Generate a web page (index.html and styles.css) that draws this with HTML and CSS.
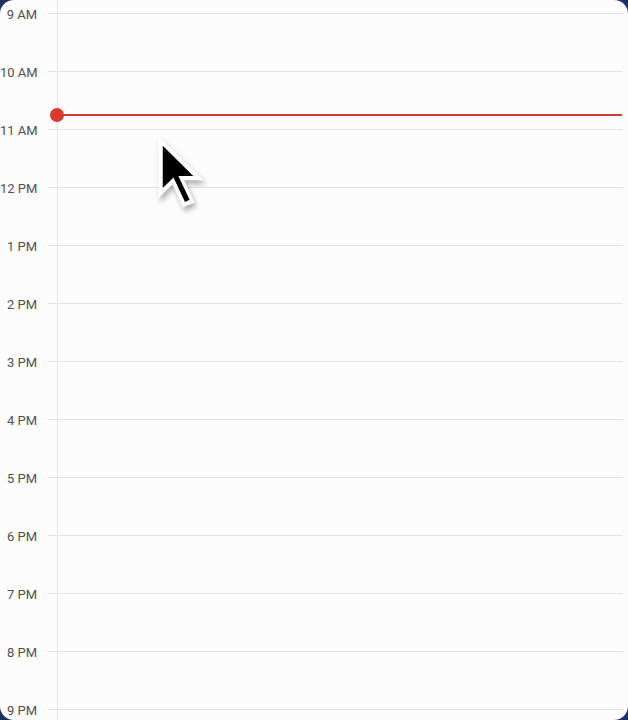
FILE: index.html
```html
<!DOCTYPE html>
<html>
<head>
<meta charset="utf-8">
<link rel="stylesheet" href="styles.css">
</head>
<body>
<div class="panel">
  <div class="grid">
    <div class="row"><span class="label">9 AM</span><span class="line"></span></div>
    <div class="row"><span class="label">10 AM</span><span class="line"></span></div>
    <div class="row"><span class="label">11 AM</span><span class="line"></span></div>
    <div class="row"><span class="label">12 PM</span><span class="line"></span></div>
    <div class="row"><span class="label">1 PM</span><span class="line"></span></div>
    <div class="row"><span class="label">2 PM</span><span class="line"></span></div>
    <div class="row"><span class="label">3 PM</span><span class="line"></span></div>
    <div class="row"><span class="label">4 PM</span><span class="line"></span></div>
    <div class="row"><span class="label">5 PM</span><span class="line"></span></div>
    <div class="row"><span class="label">6 PM</span><span class="line"></span></div>
    <div class="row"><span class="label">7 PM</span><span class="line"></span></div>
    <div class="row"><span class="label">8 PM</span><span class="line"></span></div>
    <div class="row"><span class="label">9 PM</span><span class="line"></span></div>
  </div>
  <div class="vline"></div>
  <div class="now"><span class="now-dot"></span><span class="now-line"></span></div>
  <svg class="cursor" width="65" height="94" viewBox="0 0 50 72">
    <defs>
      <filter id="sh" x="-30%" y="-30%" width="160%" height="160%">
        <feGaussianBlur stdDeviation="2"/>
      </filter>
    </defs>
    <path d="M4 3 L4 51 L15 40 L23 58 L32 54 L24 37 L39 37 Z" fill="rgba(0,0,0,0.3)" filter="url(#sh)" transform="translate(1.5,3)"/>
    <path d="M4 3 L4 51 L15 40 L23 58 L32 54 L24 37 L39 37 Z" fill="#fff"/>
    <path d="M7.5 10.5 L7.5 43 L15.8 34.8 L24.6 53.6 L28.2 52 L19.5 33.6 L31 33.6 Z" fill="#000"/>
  </svg>
</div>
</body>
</html>
```

FILE: styles.css
```css
html, body {
  margin: 0;
  padding: 0;
}
body {
  background: #1d3260;
  width: 628px;
  height: 720px;
  overflow: hidden;
}
.panel {
  position: relative;
  width: 628px;
  height: 720px;
  background: #fcfcfc;
  border-radius: 14px;
  overflow: hidden;
  font-family: Roboto, "Liberation Sans", sans-serif;
}
.grid {
  display: flex;
  flex-direction: column;
  margin-top: -16px;
}
.row {
  display: flex;
  align-items: center;
  height: 58px;
}
.label {
  width: 37px;
  text-align: right;
  font-size: 13px;
  font-weight: 400;
  color: #505050;
  line-height: 1;
  margin-top: 2px;
  white-space: nowrap;
}
.line {
  flex: 1;
  height: 1px;
  background: #e2e2e2;
  margin-left: 11px;
  margin-right: 5px;
}
.vline {
  position: absolute;
  left: 57px;
  top: 0;
  bottom: 0;
  width: 1px;
  background: #e6e6e6;
}
.now {
  position: absolute;
  left: 50px;
  right: 6px;
  top: 108px;
  height: 14px;
  display: flex;
  align-items: center;
}
.now-dot {
  width: 14px;
  height: 14px;
  border-radius: 50%;
  background: #d63a30;
  flex: none;
}
.now-line {
  flex: 1;
  height: 2px;
  background: #d0392f;
  margin-left: -2px;
}
.cursor {
  position: absolute;
  left: 153px;
  top: 132px;
}
```
